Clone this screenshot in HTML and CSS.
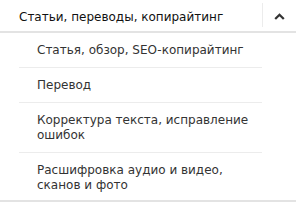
FILE: index.html
```html
<!DOCTYPE html>
<html lang="ru">
<head>
    <meta charset="UTF-8">
    <title>Категории</title>
    <link rel="stylesheet" href="styles.css">
</head>
<body>
    <div class="category">
        <div class="category-head">
            <div class="category-title">Статьи, переводы, копирайтинг</div>
            <div class="category-toggle">
                <svg width="11" height="7" viewBox="0 0 11 7">
                    <path d="M1.2 6 L5.5 1.8 L9.8 6" fill="none" stroke="#333" stroke-width="2.3"/>
                </svg>
            </div>
        </div>
        <ul class="subcats">
            <li>Статья, обзор, SEO-копирайтинг</li>
            <li>Перевод</li>
            <li>Корректура текста, исправление ошибок</li>
            <li>Расшифровка аудио и видео, сканов и фото</li>
        </ul>
    </div>
</body>
</html>
```

FILE: styles.css
```css
* {
    margin: 0;
    padding: 0;
    box-sizing: border-box;
}

body {
    font-family: "DejaVu Sans", Verdana, sans-serif;
    background: #fff;
    color: #222;
}

.category {
    width: 296px;
    border-bottom: 2px solid #e3e3e3;
}

.category-head {
    display: flex;
    align-items: stretch;
    height: 33px;
    border-bottom: 2px solid #e3e3e3;
}

.category-title {
    flex: 1;
    padding: 9px 0 0 19px;
    font-size: 12px;
    line-height: 16px;
    color: #111;
}

.category-toggle {
    width: 34px;
    margin: 3px 0 4px;
    padding-top: 2px;
    border-left: 1px solid #ececec;
    display: flex;
    align-items: center;
    justify-content: center;
}

.subcats {
    list-style: none;
    margin: 0 34px 0 19px;
}

.subcats li {
    padding: 10px 0 9px 18px;
    font-size: 12px;
    line-height: 15px;
    color: #333;
    border-bottom: 1px solid #ececec;
}

.subcats li:last-child {
    border-bottom: none;
    padding-bottom: 7px;
}
```
